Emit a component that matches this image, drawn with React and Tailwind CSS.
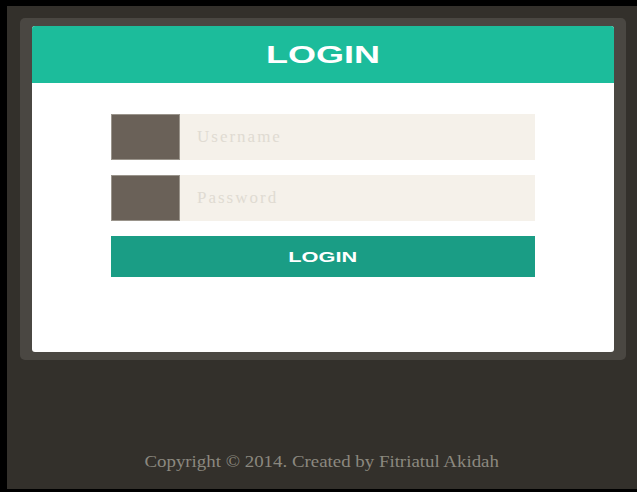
import React from 'react';

function Field({ type = 'text', placeholder }) {
    return (
        <div className="flex h-[46px]">
            <div className="w-[69px] shrink-0 bg-[#6a6158] border border-[#9a948b]" />
            <input
                type={type}
                placeholder={placeholder}
                className="flex-1 min-w-0 bg-[#f5f1ea] pl-[17px] text-[17px] text-[#5a554e] font-['Liberation_Serif',serif] outline-none placeholder:text-[#e0dbd2] placeholder:tracking-[2px]"
            />
        </div>
    );
}

export default function App() {
    return (
        <div className="w-[637px] h-[492px] bg-black pt-[6px] pl-[7px] pb-[3px]">
            <div className="h-full bg-[#33302b] flex flex-col">
                <div className="ml-[13px] mt-[12px] w-[606px] rounded-[5px] bg-[#4a4742] px-[12px] py-[8px]">
                    <div className="h-[326px] rounded-[3px] bg-white overflow-hidden">
                        <div className="h-[57px] bg-[#1cbc9b] flex items-center justify-center">
                            <h1 className="text-white font-bold text-[24px] font-['Liberation_Sans',sans-serif] scale-x-[1.5]">LOGIN</h1>
                        </div>
                        <form className="w-[424px] mx-auto pt-[31px] flex flex-col gap-[15px]">
                            <Field placeholder="Username" />
                            <Field type="password" placeholder="Password" />
                            <button
                                type="button"
                                className="h-[41px] pt-px bg-[#1a9d85] text-white font-bold text-[15px] font-['Liberation_Sans',sans-serif]"
                            >
                                <span className="inline-block scale-x-[1.45]">LOGIN</span>
                            </button>
                        </form>
                    </div>
                </div>
                <p className="mt-auto mb-[15px] text-center text-[17px] text-[#8b887f] font-['Liberation_Serif',serif]">
                    <span className="inline-block scale-x-[1.11]">Copyright © 2014. Created by Fitriatul Akidah</span>
                </p>
            </div>
        </div>
    );
}
